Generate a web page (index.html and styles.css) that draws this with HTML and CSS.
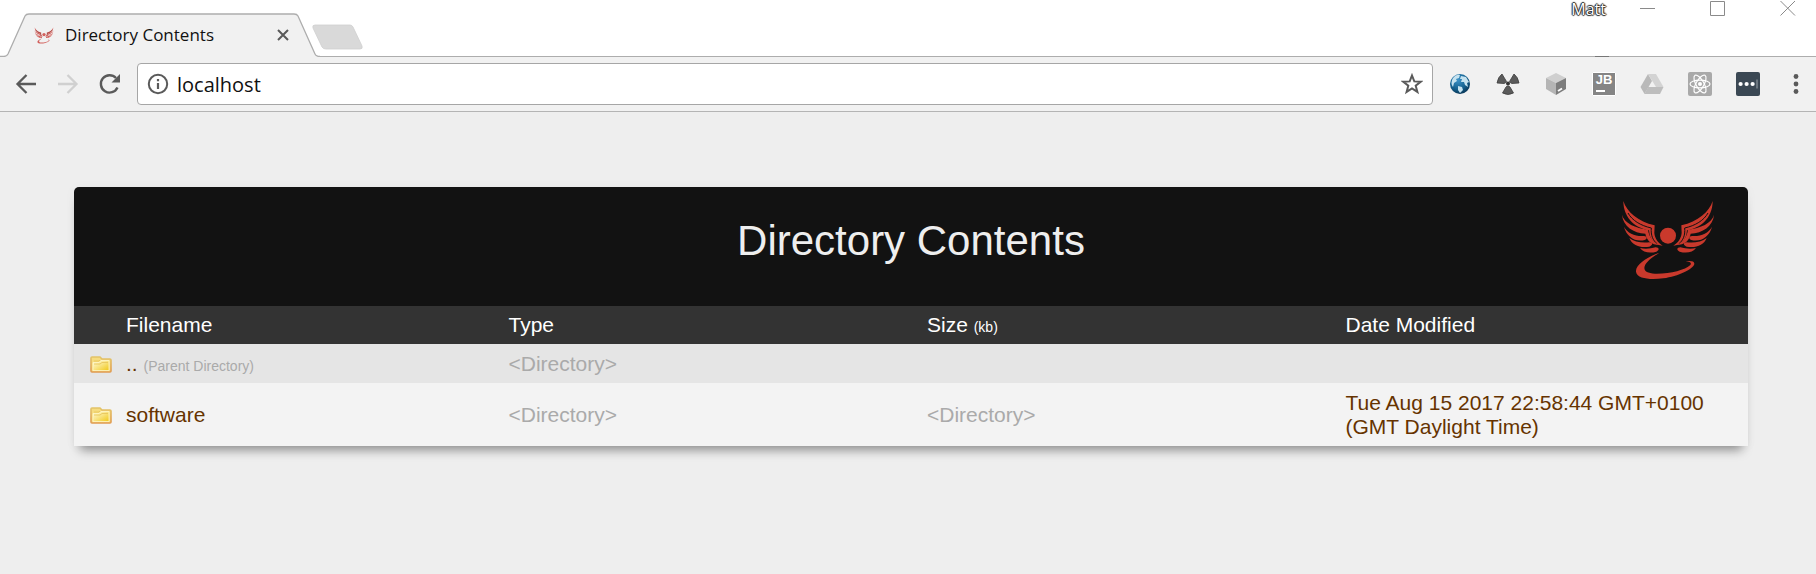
FILE: index.html
```html
<!DOCTYPE html>
<html lang="en">

<head>
    <meta charset="UTF-8">
    <meta name="viewport" content="width=device-width, initial-scale=1.0">
    <title>Directory Contents</title>

    <link rel="stylesheet" href="styles.css">
</head>

<body>
    <!-- shared shapes -->
    <svg class="defs" aria-hidden="true">
        <defs>
            <g id="wing">
                <path d="M70 66C80 98 114 128 164 139L163 162C165 180 174 191 188 200C165 199 149 185 147 154C112 149 70 121 70 66Z" fill="currentColor" />
                <path d="M84 102C96 124 122 140 154 147C152 168 158 184 172 195" class="wing-gap" />
                <path d="M66 107C72 132 107 148 144 152C147 175 161 192 180 198C153 198 140 184 136 164C101 162 69 142 66 107Z" fill="currentColor" />
                <path d="M72 143C83 163 106 173 132 171C142 171 143 180 134 183C106 190 79 173 72 143Z" fill="currentColor" />
                <path d="M88 177C102 189 124 192 148 190C159 190 159 199 148 203C121 208 96 199 88 177Z" fill="currentColor" />
                <path d="M120 207C135 211 152 209 167 205C178 205 179 214 169 218C149 224 129 220 120 207Z" fill="currentColor" />
            </g>
            <symbol id="phoenix" viewBox="60 60 288 246">
                <use href="#wing" />
                <use href="#wing" transform="translate(408 0) scale(-1 1)" />
                <circle cx="204" cy="170" r="24" fill="currentColor" />
                <path d="M178 221C140 235 106 258 108 278C112 300 150 302 190 298C235 292 280 270 283 255C284 246 272 245 257 247C270 248 276 252 271 258C255 273 210 285 165 284C140 283 130 275 134 262C138 248 158 234 178 221Z" fill="currentColor" />
            </symbol>
            <linearGradient id="folderFill" x1="0" y1="0" x2="1" y2="1">
                <stop offset="0" stop-color="#fffbe0" />
                <stop offset="0.45" stop-color="#f9e588" />
                <stop offset="1" stop-color="#f0c818" />
            </linearGradient>
            <linearGradient id="folderEdge" x1="0" y1="0" x2="0" y2="1">
                <stop offset="0" stop-color="#e3c468" />
                <stop offset="1" stop-color="#e09a50" />
            </linearGradient>
            <symbol id="folder" viewBox="0 0 22 17">
                <path d="M1 15V2Q1 1 2 1H10L12 3H20Q21 3 21 4V15Q21 16 20 16H2Q1 16 1 15Z" fill="#f6dc80" stroke="url(#folderEdge)" stroke-width="1.6" />
                <path d="M3 14.500V6.500H9L11 4.500H19V14.500Z" fill="url(#folderFill)" stroke="#fff6c8" stroke-width="0.800" />
                <path d="M4 5H9L10 4M4 8H10L12 6.500H18" fill="none" stroke="#e8c65c" stroke-width="0.900" />
            </symbol>
            <radialGradient id="globeFill" cx="0.400" cy="0.300" r="0.750">
                <stop offset="0" stop-color="#3c93c8" />
                <stop offset="0.600" stop-color="#15618f" />
                <stop offset="1" stop-color="#06304f" />
            </radialGradient>
        </defs>
    </svg>

    <div class="tabstrip">
        <div class="tab">
            <svg class="tab-shape" viewBox="0 0 320 44" width="320" height="44" aria-hidden="true">
                <path d="M4 44Q7 43 8 41L25 3Q26 1 29 1H294Q297 1 298 3L315 41Q316 43 319 44Z" fill="#f1f1f1" />
                <path d="M0 43.500H4Q7 43 8 41L25 3Q26 1 29 1H294Q297 1 298 3L315 41Q316 43.500 320 43.500" fill="none" stroke="#adadad" stroke-width="1.300" />
            </svg>
            <svg class="favicon" aria-hidden="true"><use href="#phoenix" /></svg>
            <span class="tab-title">Directory Contents</span>
            <button class="tab-close" aria-label="Close tab">
                <svg width="12" height="12" viewBox="0 0 12 12"><path d="M1 1L11 11M11 1L1 11" stroke="#5a5a5a" stroke-width="2" /></svg>
            </button>
        </div>
        <button class="new-tab" aria-label="New tab">
            <svg width="52" height="26" viewBox="0 0 52 26"><path d="M3 1H38Q40 1 41 3L50 22Q51 25 48 25H14Q11 25 10 23L1 4Q0 1 3 1Z" fill="#d9d9d9" stroke="#cfcfcf" stroke-width="0.800" /></svg>
        </button>
        <div class="window-controls">
            <span class="profile">Matt</span>
            <button aria-label="Minimize"><svg width="16" height="16" viewBox="0 0 16 16"><path d="M0 8.500H15" /></svg></button>
            <button aria-label="Maximize"><svg width="16" height="16" viewBox="0 0 16 16"><path d="M0.500 1.500H14.500V15.500H0.500Z" /></svg></button>
            <button aria-label="Close"><svg width="16" height="16" viewBox="0 0 16 16"><path d="M0.500 1L15 15.500M15 1L0.500 15.500" /></svg></button>
        </div>
    </div>

    <div class="toolbar">
        <div class="nav">
            <button aria-label="Back"><svg width="22" height="22" viewBox="0 0 22 22"><path d="M21 11H3M11.500 2L2.500 11L11.500 20" fill="none" stroke="#5a5a5a" stroke-width="2.300" /></svg></button>
            <button aria-label="Forward" disabled><svg width="22" height="22" viewBox="0 0 22 22"><path d="M1 11H19M10.500 2L19.500 11L10.500 20" fill="none" stroke="#d0d0d0" stroke-width="2.300" /></svg></button>
            <button aria-label="Reload"><svg width="22" height="22" viewBox="0 0 22 22"><path d="M18.500 14.500A8.700 8.700 0 1 1 17 5" fill="none" stroke="#5a5a5a" stroke-width="2.400" /><path d="M21 1V9.500H12.500Z" fill="#5a5a5a" /></svg></button>
        </div>
        <div class="omnibox">
            <svg width="22" height="22" viewBox="0 0 22 22" aria-hidden="true"><circle cx="11" cy="11" r="9.200" fill="none" stroke="#5a5a5a" stroke-width="2" /><path d="M11 10V16M11 6V8.200" stroke="#5a5a5a" stroke-width="2.200" /></svg>
            <input type="text" value="localhost" aria-label="Address">
            <button aria-label="Bookmark this page"><svg width="22" height="22" viewBox="0 0 22 22"><path d="M11 2.500L13.300 8.400L19.700 8.700L14.700 12.700L16.400 18.900L11 15.400L5.600 18.900L7.300 12.700L2.300 8.700L8.700 8.400Z" fill="none" stroke="#5a5a5a" stroke-width="2" /></svg></button>
        </div>
        <div class="extensions">
            <button aria-label="Globe">
                <svg width="24" height="24" viewBox="0 0 24 24"><circle cx="12" cy="12" r="10" fill="url(#globeFill)" /><path d="M5 6Q8 2 12 3L11 6L8 7L9 9L6 11L5 15Q2 11 5 6ZM13 4L18 5L21 10L19 11L20 15L17 13L16 10L13 10L14 7L12 7ZM10 14L14 15L15 18L12 21L10 18Z" fill="#c5e2ef" /></svg>
            </button>
            <button aria-label="Radiation">
                <svg width="24" height="24" viewBox="0 0 24 24"><g fill="#5b5b5b" stroke="#3d3d3d" stroke-width="0.800"><path d="M6 2L10.500 9.500Q10 11 8 11.500L1 11Q2 5 6 2Z" /><path d="M18 2L13.500 9.500Q14 11 16 11.500L23 11Q22 5 18 2Z" /><path d="M12 14Q13.500 14 14 15L17.500 21Q12 24 6.500 21L10 15Q10.500 14 12 14Z" /></g><circle cx="12" cy="11.500" r="2" fill="#333" /></svg>
            </button>
            <button aria-label="Box">
                <svg width="24" height="24" viewBox="0 0 24 24"><path d="M12 1L22 6L12 11L2 6Z" fill="#cfcfcf" /><path d="M2 6L12 11V23L2 17Z" fill="#b5b5b5" /><path d="M12 11L22 6V17L12 23Z" fill="#7d7d7d" /><path d="M14 19L18 16.500" stroke="#fff" stroke-width="1.800" /></svg>
            </button>
            <button class="jb" aria-label="JetBrains"><span>JB</span></button>
            <button aria-label="Drive">
                <svg width="24" height="24" viewBox="0 0 24 24"><path d="M8 2L12 9L4.500 22L0.500 15Z" fill="#b9b9b9" /><path d="M8 2H16L23.500 15H16Z" fill="#d3d3d3" /><path d="M8 15H23.500L20 22H4.500Z" fill="#bdbdbd" /></svg>
            </button>
            <button aria-label="React">
                <svg width="24" height="24" viewBox="0 0 24 24"><rect width="24" height="24" rx="2" fill="#a9a9a9" /><g fill="none" stroke="#fff" stroke-width="1.200"><ellipse cx="12" cy="12" rx="10" ry="3.900" /><ellipse cx="12" cy="12" rx="10" ry="3.900" transform="rotate(60 12 12)" /><ellipse cx="12" cy="12" rx="10" ry="3.900" transform="rotate(120 12 12)" /></g><circle cx="12" cy="12" r="2" fill="#fff" /></svg>
            </button>
            <button aria-label="Passwords">
                <svg width="24" height="24" viewBox="0 0 24 24"><rect width="24" height="24" rx="2" fill="#3b4854" /><g fill="#fff"><circle cx="4.600" cy="12" r="2.100" /><circle cx="10.600" cy="12" r="2.100" /><circle cx="16.600" cy="12" r="2.100" /></g><path d="M21 7.500V16.500" stroke="#9aa2a9" /></svg>
            </button>
            <button class="menu" aria-label="Menu">
                <svg width="24" height="24" viewBox="0 0 24 24"><g fill="#5a5a5a"><circle cx="12" cy="4.500" r="2.400" /><circle cx="12" cy="12" r="2.400" /><circle cx="12" cy="19.500" r="2.400" /></g></svg>
            </button>
        </div>
    </div>

    <main class="container">
        <header class="header">
            <h1>Directory Contents</h1>
            <svg class="logo" role="img" aria-label="Phoenix"><use href="#phoenix" /></svg>
        </header>
        <table>
            <thead>
                <tr>
                    <th class="name">Filename</th>
                    <th>Type</th>
                    <th>Size <small>(kb)</small></th>
                    <th>Date Modified</th>
                </tr>
            </thead>
            <tbody>
                <tr>
                    <td><svg class="folder" aria-hidden="true"><use href="#folder" /></svg><a href="..">.. <small>(Parent Directory)</small></a></td>
                    <td class="muted">&lt;Directory&gt;</td>
                    <td></td>
                    <td></td>
                </tr>
                <tr>
                    <td><svg class="folder" aria-hidden="true"><use href="#folder" /></svg><a href="software">software</a></td>
                    <td class="muted">&lt;Directory&gt;</td>
                    <td class="muted">&lt;Directory&gt;</td>
                    <td>Tue Aug 15 2017 22:58:44 GMT+0100 (GMT Daylight Time)</td>
                </tr>
            </tbody>
        </table>
    </main>
</body>

</html>
```
FILE: styles.css
```css
* {
    box-sizing: border-box;
}

body {
    min-height: 100vh;
    margin: 0;
    background-color: #eee;
    font-family: "Liberation Sans", Arial, sans-serif;
    font-size: 21px;
    line-height: 24px;
    color: #663300;
}

button {
    display: flex;
    justify-content: center;
    align-items: center;
    padding: 0;
    border: none;
    background: none;
    cursor: pointer;
}

.defs {
    position: absolute;
    width: 0;
    height: 0;
}

.wing-gap {
    fill: none;
    stroke: #121212;
    stroke-width: 3;
}

/* tab strip */
.tabstrip {
    display: flex;
    align-items: flex-end;
    height: 57px;
    background-color: #fff;
    box-shadow: inset 0 -1px #adadad;
}

.tab {
    position: relative;
    display: flex;
    align-items: center;
    width: 320px;
    height: 44px;
    padding: 0 31px 0 34px;
}

.tab-shape {
    position: absolute;
    left: 0;
    top: 0;
}

.favicon {
    position: relative;
    width: 20px;
    height: 17px;
    color: #d2605c;
}

.tab-title {
    position: relative;
    flex: 1;
    margin-left: 11px;
    font-family: "Open Sans", sans-serif;
    font-size: 17px;
    color: #111;
}

.tab-close {
    position: relative;
}

.new-tab {
    margin-left: -8px;
    margin-bottom: 7px;
}

.window-controls {
    display: flex;
    align-self: stretch;
    align-items: flex-start;
    margin-left: auto;
}

.window-controls button {
    width: 56px;
    height: 16px;
    margin-left: 14px;
}

.window-controls svg {
    fill: none;
    stroke: #8a8a8a;
}

.profile {
    position: relative;
    height: 57px;
    font-family: "Open Sans", sans-serif;
    font-size: 16px;
    line-height: 18px;
    color: #fff;
    text-shadow: 1px 0 1px #222, -1px 0 1px #222, 0 1px 1px #222, 0 -1px 1px #222;
}

/* small marker on the strip's bottom line */
.profile::after {
    content: "";
    position: absolute;
    right: -3px;
    bottom: 0;
    width: 14px;
    height: 1px;
    background-color: #777;
}

/* toolbar */
.toolbar {
    display: flex;
    align-items: center;
    height: 55px;
    padding-left: 5px;
    background-color: #f1f1f1;
    border-bottom: 1px solid #b4b4b4;
}

.nav,
.extensions {
    display: flex;
}

.nav button {
    width: 42px;
    height: 42px;
}

.omnibox {
    display: flex;
    flex: 1;
    align-items: center;
    height: 42px;
    margin: 0 3px 0 6px;
    padding: 0 9px;
    background-color: #fff;
    border: 1px solid #a6a6a6;
    border-radius: 4px;
}

.omnibox input {
    flex: 1;
    min-width: 0;
    margin-left: 8px;
    padding: 0;
    border: none;
    outline: none;
    font-family: "Open Sans", sans-serif;
    font-size: 20px;
    color: #111;
}

.extensions button {
    width: 48px;
    height: 42px;
}

.extensions .menu {
    width: 40px;
    margin-left: 4px;
}

.jb span {
    width: 24px;
    height: 24px;
    border: 1px solid #fff;
    border-radius: 1px;
    background: linear-gradient(#fff, #fff) 3px 17px / 9px 2px no-repeat #858585;
    font-family: "Liberation Sans", sans-serif;
    font-size: 13px;
    font-weight: bold;
    line-height: 14px;
    color: #fff;
}

/* directory listing */
.container {
    margin: 75px 68px 0 74px;
    border-radius: 5px 5px 0 0;
    box-shadow: 0 10px 10px -6px rgba(0, 0, 0, 0.4), 0 1px 12px rgba(0, 0, 0, 0.04);
}

.header {
    display: grid;
    grid-template-columns: 1fr auto 1fr;
    padding: 12px 32px 23px;
    background-color: #121212;
    border-radius: 5px 5px 0 0;
}

.header h1 {
    grid-column: 2;
    margin: 0;
    font-size: 42px;
    font-weight: normal;
    line-height: 84px;
    color: #eee;
}

.logo {
    justify-self: end;
    width: 96px;
    height: 82px;
    color: #c9392c;
}

table {
    width: 100%;
    table-layout: fixed;
    border-collapse: collapse;
}

th,
td {
    padding: 8px 16px 7px;
    text-align: left;
    font-weight: normal;
}

th {
    padding-top: 7px;
    background-color: #333;
    color: #fff;
}

th.name {
    padding-left: 52px;
}

small {
    font-size: 14px;
    line-height: 14px;
}

tbody tr {
    background-color: #f3f3f3;
}

tbody tr:nth-child(odd) {
    background-color: #e5e5e5;
}

td a {
    color: #663300;
    text-decoration: none;
}

td small,
.muted {
    color: #aaa;
}

.folder {
    width: 22px;
    height: 17px;
    margin-right: 14px;
    vertical-align: -2px;
}
```
